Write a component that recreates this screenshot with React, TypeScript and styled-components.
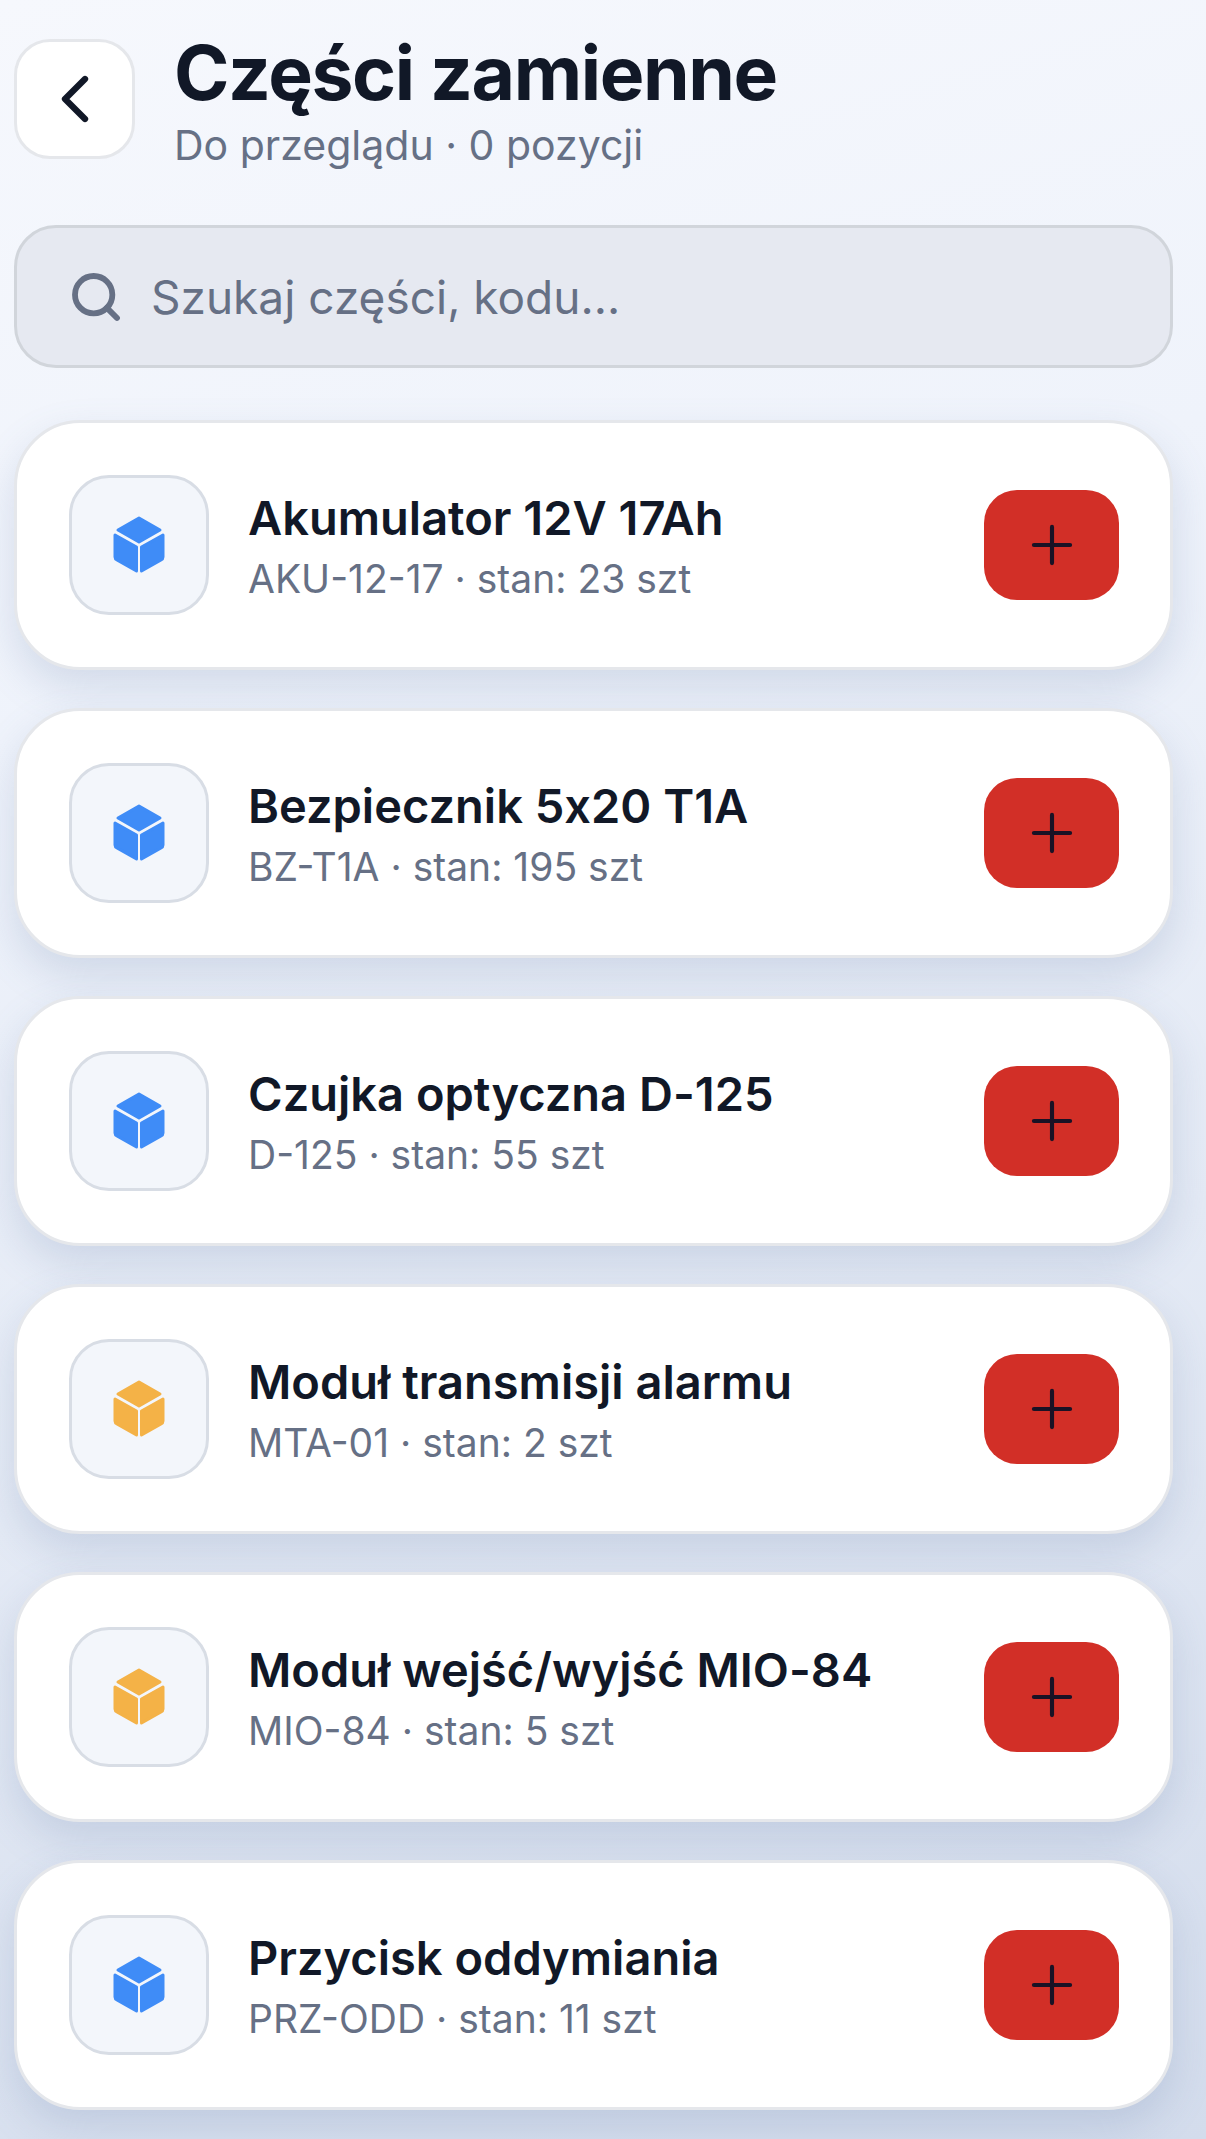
import { ChevronLeft, Plus, Search } from "lucide-react";
import styled, { createGlobalStyle } from "styled-components";

const GlobalStyle = createGlobalStyle`
  html, body {
    margin: 0;
    padding: 0;
  }
  * {
    box-sizing: border-box;
  }
`;

const Page = styled.div`
  width: 1206px;
  height: 2139px;
  overflow: hidden;
  padding: 39px 33px 0 14px;
  font-family: Inter, "Noto Sans", sans-serif;
  font-feature-settings: "calt" 0;
  background: linear-gradient(165deg, #f6f8fd 0%, #eff3fb 30%, #e4eaf5 62%, #d3dcec 100%);
`;

const Header = styled.header`
  display: flex;
  align-items: flex-start;
  gap: 39px;
`;

const BackButton = styled.button`
  width: 121px;
  height: 120px;
  flex: none;
  display: flex;
  align-items: center;
  justify-content: center;
  padding: 0;
  border: 3px solid #e5e7eb;
  border-radius: 36px;
  background: #fff;
  color: #111827;
`;

const HeaderText = styled.div`
  display: flex;
  flex-direction: column;
`;

const Title = styled.h1`
  margin: 0;
  font-size: 75px;
  line-height: 68px;
  font-weight: 700;
  letter-spacing: -1.4px;
  color: #111827;
`;

const Subtitle = styled.p`
  margin: 19px 0 0;
  font-size: 41px;
  line-height: 38px;
  color: #667085;
`;

const SearchBox = styled.div`
  margin-top: 61px;
  height: 143px;
  display: flex;
  align-items: center;
  gap: 27px;
  padding-left: 51px;
  border: 3px solid #d1d5db;
  border-radius: 42px;
  background: #e6e9f1;
  color: #667085;
`;

const SearchText = styled.span`
  font-size: 46px;
  color: #667085;
`;

const List = styled.div`
  margin-top: 52px;
  display: flex;
  flex-direction: column;
  gap: 38px;
`;

const Card = styled.div`
  height: 250px;
  display: flex;
  align-items: center;
  padding: 0 51px 0 52px;
  border: 3px solid #e5e7eb;
  border-radius: 66px;
  background: #fff;
  box-shadow: 0 18px 42px rgba(96, 118, 165, 0.2);
`;

const IconBox = styled.div`
  width: 140px;
  height: 140px;
  flex: none;
  display: flex;
  align-items: center;
  justify-content: center;
  border: 3px solid #d8dde5;
  border-radius: 40px;
  background: #f3f6fb;
`;

const CardText = styled.div`
  flex: 1;
  min-width: 0;
  margin-left: 39px;
  display: flex;
  flex-direction: column;
`;

const PartName = styled.div`
  font-size: 47px;
  line-height: 56px;
  font-weight: 600;
  color: #111827;
`;

const PartMeta = styled.div`
  margin-top: 11px;
  font-size: 39px;
  line-height: 44px;
  font-feature-settings: "calt" 1;
  color: #667085;
`;

const AddButton = styled.button`
  width: 135px;
  height: 110px;
  flex: none;
  display: flex;
  align-items: center;
  justify-content: center;
  padding: 0;
  border: none;
  border-radius: 33px;
  background: #d22f27;
  color: #1a1225;
`;

const Cube = ({ color }: { color: string }) => (
  <svg width="52" height="58" viewBox="0 0 52 58" fill={color} stroke={color} strokeWidth="3" strokeLinejoin="round">
    <path d="M26 2 L47 14 L26 26 L5 14 Z" />
    <path d="M2 19 L23.5 31 L23.5 55 L4 44 Q2 43 2 41 Z" />
    <path d="M50 19 L28.5 31 L28.5 55 L48 44 Q50 43 50 41 Z" />
  </svg>
);

const parts = [
  { name: "Akumulator 12V 17Ah", meta: "AKU-12-17 · stan: 23 szt", low: false },
  { name: "Bezpiecznik 5x20 T1A", meta: "BZ-T1A · stan: 195 szt", low: false },
  { name: "Czujka optyczna D-125", meta: "D-125 · stan: 55 szt", low: false },
  { name: "Moduł transmisji alarmu", meta: "MTA-01 · stan: 2 szt", low: true },
  { name: "Moduł wejść/wyjść MIO-84", meta: "MIO-84 · stan: 5 szt", low: true },
  { name: "Przycisk oddymiania", meta: "PRZ-ODD · stan: 11 szt", low: false },
];

export default function App() {
  return (
    <Page>
      <GlobalStyle />
      <Header>
        <BackButton>
          <ChevronLeft size={80} strokeWidth={1.9} />
        </BackButton>
        <HeaderText>
          <Title>Części zamienne</Title>
          <Subtitle>Do przeglądu · 0 pozycji</Subtitle>
        </HeaderText>
      </Header>
      <SearchBox>
        <Search size={56} strokeWidth={2.5} />
        <SearchText>Szukaj części, kodu...</SearchText>
      </SearchBox>
      <List>
        {parts.map((part) => (
          <Card key={part.name}>
            <IconBox>
              <Cube color={part.low ? "#f4b247" : "#3f8cf7"} />
            </IconBox>
            <CardText>
              <PartName>{part.name}</PartName>
              <PartMeta>{part.meta}</PartMeta>
            </CardText>
            <AddButton>
              <Plus size={62} strokeWidth={1.6} />
            </AddButton>
          </Card>
        ))}
      </List>
    </Page>
  );
}
